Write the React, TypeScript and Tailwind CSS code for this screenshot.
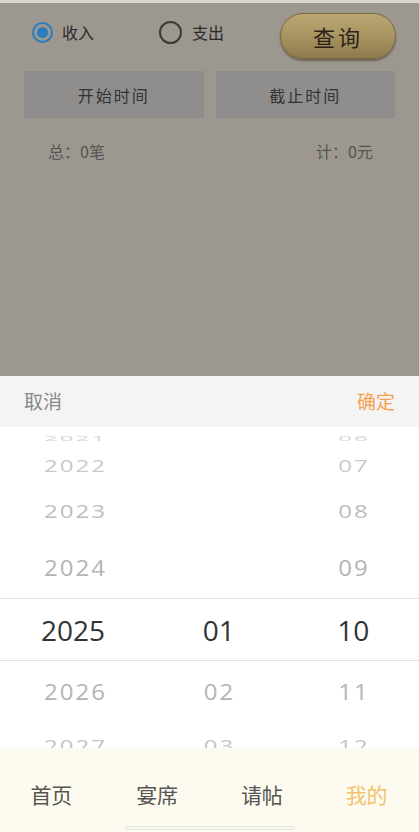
import React from "react";

const serif = { fontFamily: '"Noto Sans CJK SC", sans-serif' };

function Row({ h, children }: { h: number; children: React.ReactNode }) {
  return (
    <div className="grid grid-cols-3 items-center overflow-hidden" style={{ height: h }}>
      {children}
    </div>
  );
}

function Cell({ text, color, scale, left }: { text: string; color: string; scale: number; left: number }) {
  return (
    <div className="relative h-full">
      <span
        className="absolute top-1/2 text-[24px] tracking-[2px] leading-none"
        style={{ left, color, transform: `translateY(-50%) scaleY(${scale})`, fontFamily: '"Open Sans", sans-serif' }}
      >
        {text}
      </span>
    </div>
  );
}

export default function App() {
  const rows: { h: number; y: string; m: string; d: string; c: string; s: number }[] = [
    { h: 21, y: "2021", m: "", d: "06", c: "#d6d6d6", s: 0.3 },
    { h: 36, y: "2022", m: "", d: "07", c: "#cacaca", s: 0.68 },
    { h: 54, y: "2023", m: "", d: "08", c: "#bdbdbd", s: 0.78 },
    { h: 60, y: "2024", m: "", d: "09", c: "#b4b4b4", s: 0.94 },
  ];
  const rowsBelow = [
    { h: 62, y: "2026", m: "02", d: "11", c: "#b4b4b4", s: 0.94 },
    { h: 46, y: "2027", m: "03", d: "12", c: "#c4c4c4", s: 0.78 },
  ];
  return (
    <div className="w-[419px] h-[832px] relative overflow-hidden bg-white">
      {/* dimmed page */}
      <div className="h-[376px] bg-[#9d988f] flex flex-col" style={serif}>
        <div className="h-[3px] bg-[#d9d5c9]" />
        <div className="flex items-center h-[58px] pl-[32px] pr-[23px]">
          <div className="flex items-center">
            <div className="w-[21px] h-[21px] rounded-full border-[2px] border-[#2a7dbf] flex items-center justify-center">
              <div className="w-[11px] h-[11px] rounded-full bg-[#2a7dbf]" />
            </div>
            <span className="ml-[9px] text-[16px] text-[#2a2a2a]">收入</span>
          </div>
          <div className="flex items-center ml-[65px]">
            <div className="w-[23px] h-[23px] rounded-full border-[2px] border-[#3a3a3a]" />
            <span className="ml-[10px] text-[16px] text-[#2a2a2a]">支出</span>
          </div>
          <div className="ml-auto mt-[8px] w-[116px] h-[46px] rounded-full border border-[#7a6a3e] bg-gradient-to-b from-[#b9a772] via-[#a89462] to-[#8e7a4c] shadow-[0_2px_2px_rgba(60,45,20,0.5)] flex items-center justify-center">
            <span className="text-[22px] text-[#2a2218] tracking-[3px]">查询</span>
          </div>
        </div>
        <div className="flex gap-[12px] px-[24px] mt-[10px]">
          <div className="flex-1 h-[47px] bg-[#8f8e8c] flex items-center justify-center text-[16px] text-[#333] tracking-[2px]">开始时间</div>
          <div className="flex-1 h-[47px] bg-[#8f8e8c] flex items-center justify-center text-[16px] text-[#333] tracking-[2px]">截止时间</div>
        </div>
        <div className="flex justify-between pl-[48px] pr-[46px] mt-[21px] text-[16px] text-[#555]">
          <span>总：0笔</span>
          <span>计：0元</span>
        </div>
      </div>

      {/* picker header */}
      <div className="h-[51px] bg-[#f4f4f4] flex items-center justify-between px-[24px] text-[19px]" style={{ fontFamily: '"Noto Sans CJK SC", sans-serif' }}>
        <span className="text-[#888]">取消</span>
        <span className="text-[#f7a050]">确定</span>
      </div>

      {/* wheel */}
      <div className="bg-white">
        {rows.map((r) => (
          <Row key={r.y} h={r.h}>
            <Cell text={r.y} color={r.c} scale={r.s} left={44} />
            <Cell text={r.m} color={r.c} scale={r.s} left={64} />
            <Cell text={r.d} color={r.c} scale={r.s} left={59} />
          </Row>
        ))}
        <div className="grid grid-cols-3 items-center h-[63px] border-y border-[#e2e2e2] text-[28px] text-[#333]" style={{ fontFamily: '"Open Sans", sans-serif' }}>
          <span className="pl-[41px]">2025</span>
          <span className="pl-[63px]">01</span>
          <span className="pl-[58px]">10</span>
        </div>
        {rowsBelow.map((r) => (
          <Row key={r.y} h={r.h}>
            <Cell text={r.y} color={r.c} scale={r.s} left={44} />
            <Cell text={r.m} color={r.c} scale={r.s} left={64} />
            <Cell text={r.d} color={r.c} scale={r.s} left={59} />
          </Row>
        ))}
      </div>

      {/* tab bar */}
      <div className="absolute left-0 right-0 bottom-0 h-[84px] bg-[#fdfbef]" style={{ fontFamily: '"Noto Sans CJK SC", sans-serif' }}>
        <div className="grid grid-cols-4 h-[94px] items-center text-[21px] text-[#555]">
          <span className="text-center pr-[2px]">首页</span>
          <span className="text-center">宴席</span>
          <span className="text-center">请帖</span>
          <span className="text-center text-[#f2c36e]">我的</span>
        </div>
        <div className="absolute left-[125px] w-[170px] bottom-[2px] h-[4px] rounded-full border border-[#e6e8e0] bg-[#f8f9f2]" />
      </div>
    </div>
  );
}
